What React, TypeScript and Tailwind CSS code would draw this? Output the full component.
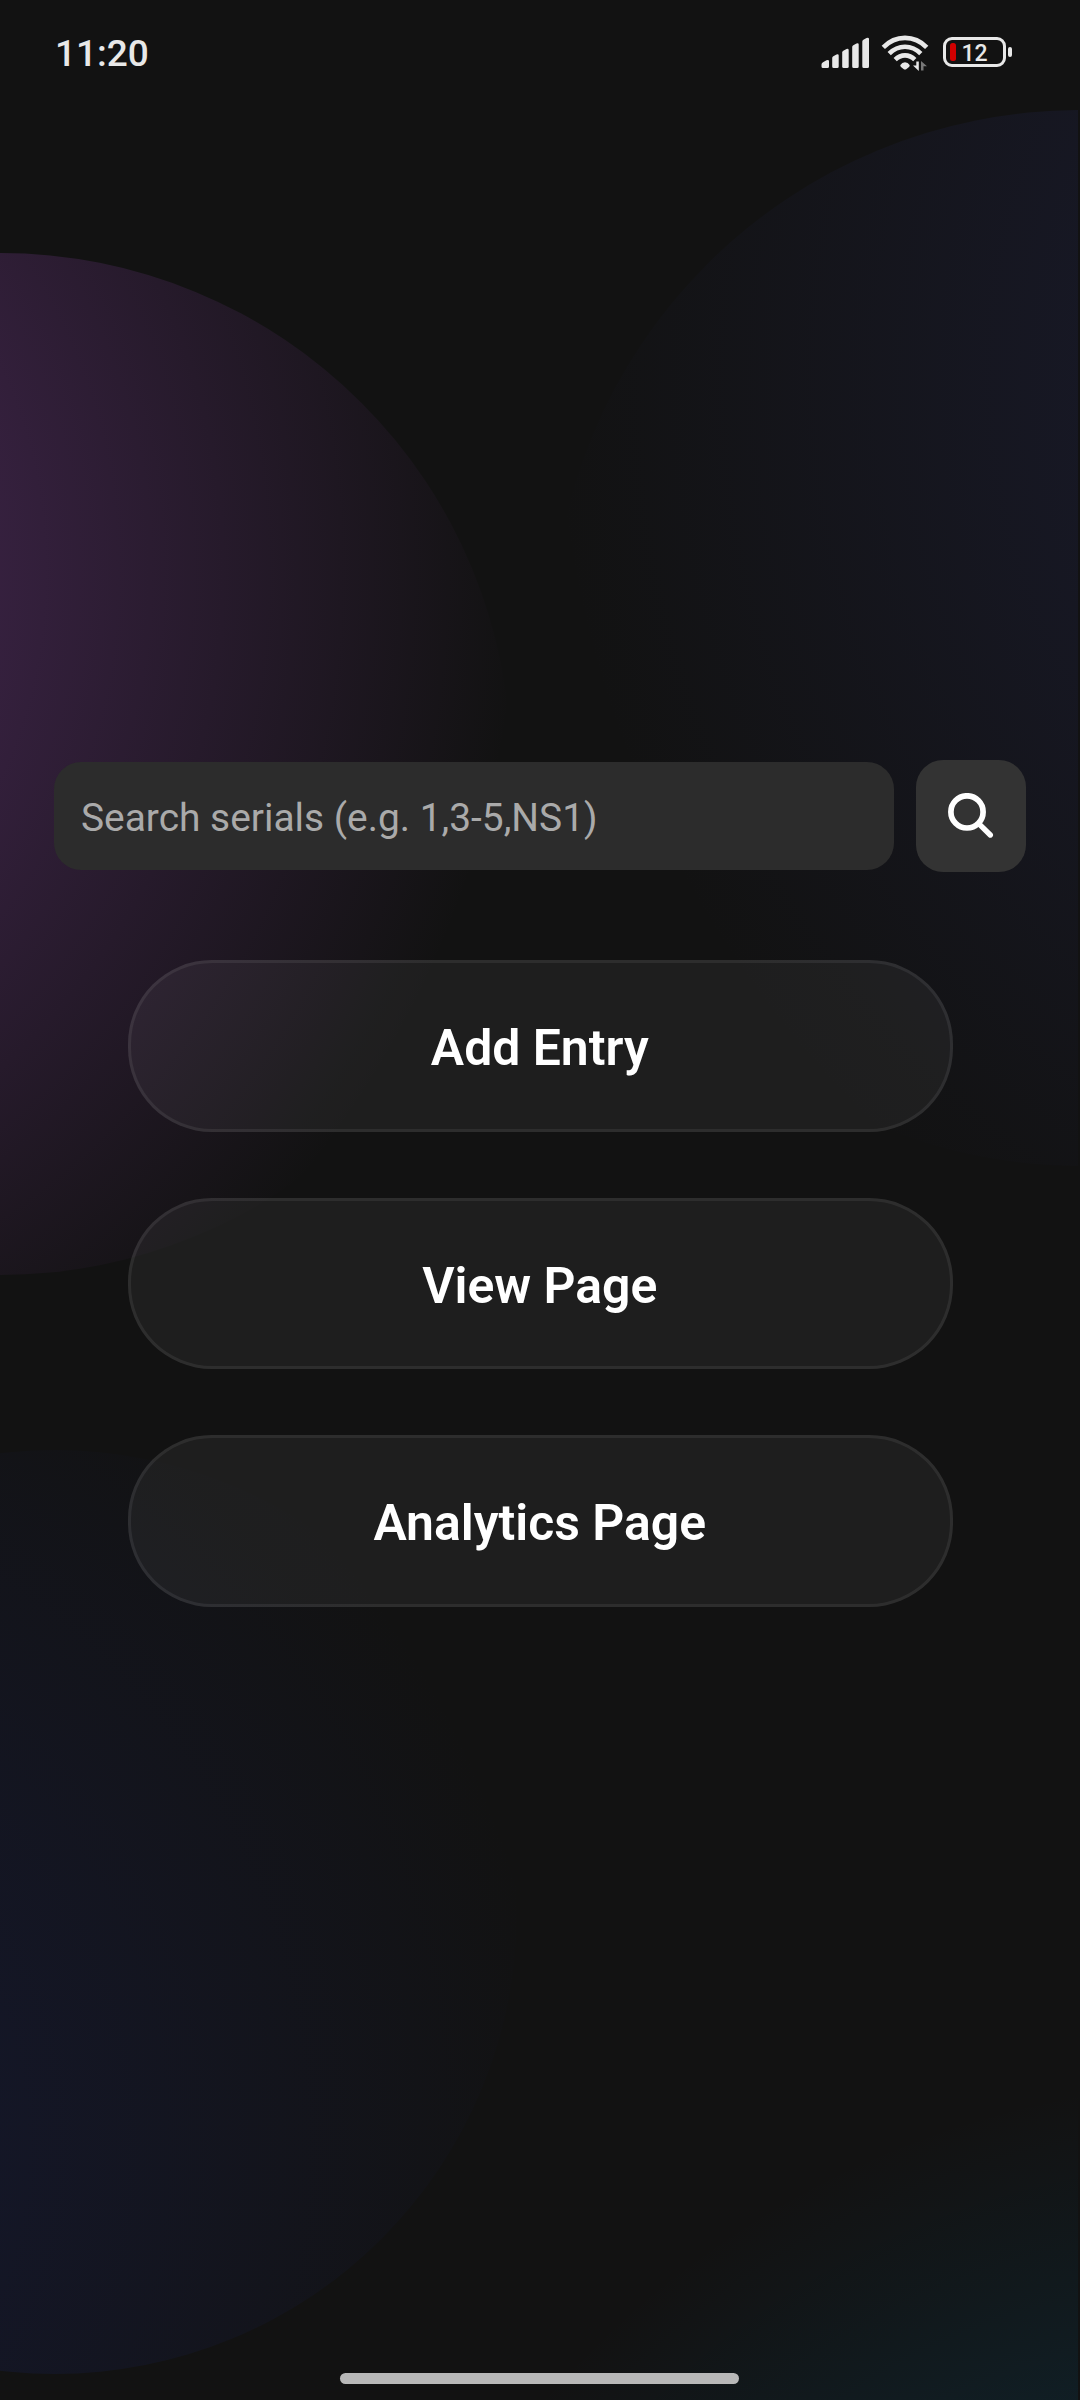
import React from "react";

function SignalIcon() {
  return (
    <svg width="48" height="32" viewBox="0 0 48 32" fill="#e8e8e8">
      <path d="M.5 27.5Q.5 26 2 25.2L5.500 23.300Q8 22.300 8 24.300V29.500Q8 31 6.500 31H2Q.5 31 .5 29.500Z" />
      <path d="M11.200 21Q11.200 19.800 12.300 19.200L15.500 17.400Q17.700 16.600 17.700 18.600V29.500Q17.700 31 16.200 31H12.700Q11.200 31 11.200 29.500Z" />
      <path d="M21.200 15.500Q21.200 14.300 22.300 13.700L25.500 12Q27.700 11.300 27.700 13.300V29.500Q27.700 31 26.200 31H22.700Q21.200 31 21.200 29.500Z" />
      <path d="M31.200 10Q31.200 8.800 32.300 8.200L35.500 6.400Q37.700 5.600 37.700 7.600V29.500Q37.700 31 36.200 31H32.700Q31.200 31 31.200 29.500Z" />
      <path d="M41.300 4.500Q41.300 3.300 42.400 2.700L45.500 .9Q48 .1 48 2.100V29.500Q48 31 46.500 31H42.800Q41.300 31 41.300 29.500Z" />
    </svg>
  );
}

function WifiIcon() {
  return (
    <svg width="48" height="36" viewBox="0 0 48 36" fill="none">
      <g stroke="#e8e8e8" strokeWidth="4.600">
        <path d="M2.300 12.400Q11.500 2.900 24 2.900T45.700 12.400" />
        <path d="M8.200 18.600Q15 11.700 24 11.700T39.800 18.600" />
        <path d="M14.200 24.600Q18.500 20.400 24 20.400T33.800 24.600" />
      </g>
      <path d="M19.400 30Q21 27.300 24 27.300T28.600 30Q29 31 28 32L25.500 34Q24 35 22.500 34L20 32Q19 31 19.400 30Z" fill="#e8e8e8" />
      <path d="M37.800 26.500V36L32 30.500H35.300V26.500Z" fill="#e8e8e8" />
      <path d="M40 35.500V26L46 31.300H42.500V35.500Z" fill="#777" />
    </svg>
  );
}

function Battery() {
  return (
    <div className="flex items-center gap-[2px]">
      <div className="flex h-[30px] w-[63px] items-center rounded-[9px] border-3 border-[#e8e8e8] pl-[3.500px]">
        <div className="h-[18px] w-[6px] rounded-[2.500px] bg-[#d00000]" />
        <span className="ml-[6px] pt-[2px] text-[23px] leading-none font-medium text-[#e8e8e8]">12</span>
      </div>
      <div className="h-[10px] w-[4px] rounded-[2px] bg-[#e8e8e8]" />
    </div>
  );
}

function PillButton({ label }: { label: string }) {
  return (
    <button className="flex h-[171.500px] w-full items-center justify-center rounded-[84px] border-3 border-white/7 bg-white/5 pt-[7px] pr-[1.500px] text-[49.900px] leading-none font-semibold text-white">
      {label}
    </button>
  );
}

/* Oversized glowing discs that bleed off the screen edges. */
function Glows() {
  return (
    <div className="absolute inset-y-0 left-0 w-[1078px] overflow-hidden">
      <div className="absolute top-[253px] left-[-511px] size-[1022px] rounded-full bg-[radial-gradient(circle_960px_at_71px_319px,rgba(142,68,173,0.52),rgba(142,68,173,0))]" />
      <div className="absolute top-[110px] left-[552px] size-[1056px] rounded-full bg-[radial-gradient(circle_1050px_at_1048px_265px,rgba(50,56,140,0.29),rgba(50,56,140,0))]" />
      <div className="absolute top-[1450px] left-[-407px] size-[924px] rounded-full bg-[radial-gradient(circle_930px_at_37px_698px,rgba(28,41,128,0.3),rgba(28,41,128,0))]" />
      <div className="absolute top-[2076px] left-[312px] size-[1862px] rounded-full bg-[radial-gradient(circle_931px_at_931px_931px,rgba(1,138,201,0.3),rgba(1,138,201,0))]" />
    </div>
  );
}

export default function App() {
  return (
    <div className="relative h-[2400px] w-[1080px] overflow-hidden bg-[#121212] font-['Roboto',sans-serif]">
      <Glows />
      <div className="relative flex h-full flex-col">
        <header className="flex h-[104px] items-center justify-between pr-[68px] pl-[55px]">
          <span className="pt-[3px] text-[37px] leading-none font-medium text-[#e8e8e8]">11:20</span>
          <div className="flex items-center">
            <div className="pt-[2px]"><SignalIcon /></div>
            <div className="ml-[12px] pt-[1px]"><WifiIcon /></div>
            <div className="ml-[14px]"><Battery /></div>
          </div>
        </header>

        <main className="flex flex-1 flex-col pt-[656px]">
          <div className="flex items-center gap-[22px] px-[54px]">
            <input
              className="h-[108px] w-[840px] rounded-[27px] bg-[#2c2c2c] pt-[3px] pr-[27px] pl-[27px] text-[38.900px] text-white outline-none placeholder:text-[#aaaaaa]"
              placeholder="Search serials (e.g. 1,3-5,NS1)"
            />
            <button className="flex h-[112px] w-[110px] items-center justify-center rounded-[27px] bg-[#333333]">
              <svg width="46" height="46" viewBox="0 0 46 46" fill="none" stroke="#fff">
                <circle cx="19" cy="18.900" r="16.100" strokeWidth="5.700" />
                <path d="M31 30.800L42.300 42" strokeWidth="5.400" strokeLinecap="round" />
              </svg>
            </button>
          </div>
          <div className="mt-[88px] flex flex-col gap-[66px] pr-[127px] pl-[128px]">
            <PillButton label="Add Entry" />
            <PillButton label="View Page" />
            <PillButton label="Analytics Page" />
          </div>
        </main>

        <footer className="flex h-[27px] justify-center pr-[1px]">
          <div className="h-[11px] w-[399px] rounded-full bg-[#b8b8b8]" />
        </footer>
      </div>
    </div>
  );
}
